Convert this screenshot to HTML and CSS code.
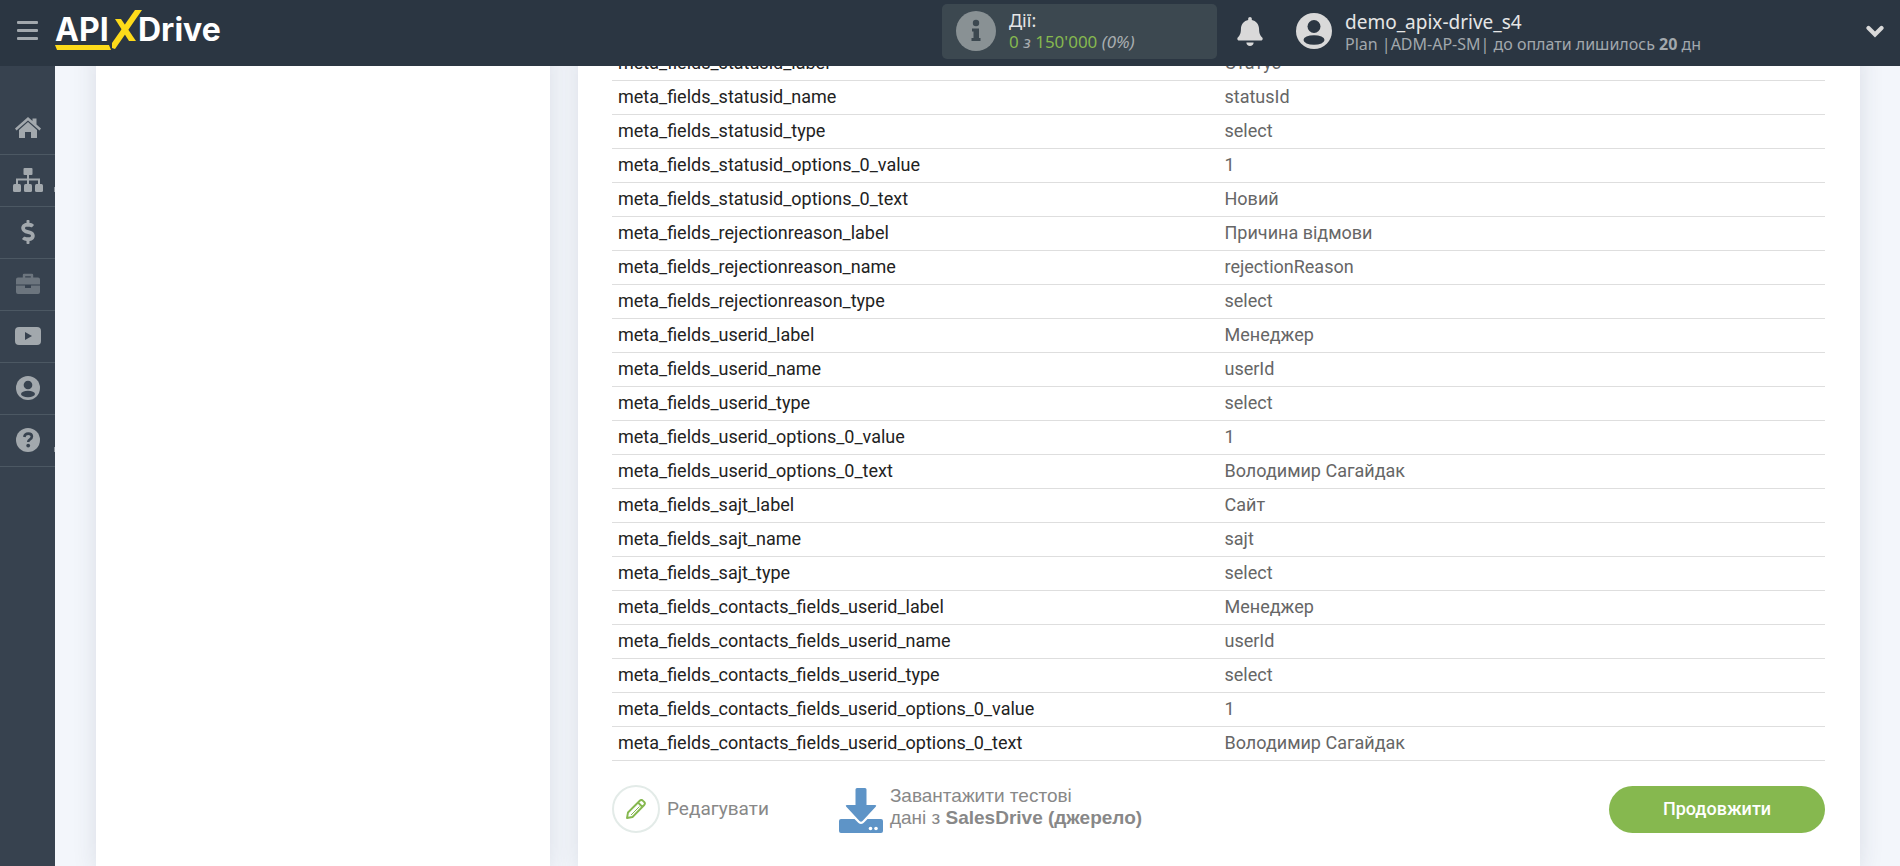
FILE: index.html
```html
<!DOCTYPE html>
<html lang="uk">
<head>
<meta charset="utf-8">
<title>ApiX-Drive</title>
<link rel="stylesheet" href="styles.css">
</head>
<body>
<header class="topbar">
  <button class="menu-toggle" aria-label="Меню"><span></span><span></span><span></span></button>
  <a class="logo" href="#" aria-label="APIXDrive">
    <svg width="172" height="44" viewBox="0 0 172 44">
      <text class="logo-text" x="0" y="32">API</text>
      <text class="logo-text" x="83" y="32">Drive</text>
      <path d="M0 36h54l2 5H2z" fill="#fddb1a"/>
      <path d="M80 1h7L60 40l-3-1v-5z" fill="#fddb1a"/>
      <path d="M60 10h6l15 22h-7z" fill="#fddb1a"/>
    </svg>
  </a>
  <section class="actions">
    <svg class="info" viewBox="0 0 40 40"><circle cx="20" cy="20" r="20" fill="#899194"/><g fill="#3c4850"><circle cx="20" cy="12" r="3.2"/><path d="M16 17.500h7v9.500h1.500v3h-9v-3h2v-6.500h-1.500z"/></g></svg>
    <div class="actions-text">
      <div class="actions-title">Дії:</div>
      <div class="actions-count"><b>0</b> <i>з</i> <b>150'000</b> <i>(0%)</i></div>
    </div>
  </section>
  <button class="bell" aria-label="Сповіщення"><svg width="26" height="29" viewBox="0 0 448 512"><path fill="#d9d9d9" d="M224 512c35.320 0 63.970-28.650 63.970-64H160.030c0 35.350 28.650 64 63.970 64zm215.390-149.710c-19.320-20.760-55.470-51.990-55.470-154.290 0-77.700-54.480-139.900-127.940-155.160V32c0-17.670-14.320-32-31.980-32s-31.980 14.330-31.980 32v20.840C118.560 68.100 64.080 130.300 64.080 208c0 102.300-36.150 133.530-55.470 154.290-6 6.450-8.660 14.160-8.610 21.710.11 16.400 12.980 32 32.100 32h383.800c19.120 0 32-15.600 32.100-32 .05-7.550-2.610-15.270-8.610-21.710z"/></svg></button>
  <button class="account">
    <svg width="36" height="36" viewBox="0 0 36 36"><circle cx="18" cy="18" r="18" fill="#d9d9d9"/><g fill="#2b3642"><circle cx="18" cy="13.500" r="6.500"/><ellipse cx="18" cy="27" rx="10.500" ry="4.800"/></g></svg>
    <span class="account-text">
      <span class="account-name">demo_apix-drive_s4</span>
      <span class="account-plan">Plan |ADM-AP-SM| до оплати лишилось <b>20</b> дн</span>
    </span>
    <svg class="chevron" width="18" height="13" viewBox="0 0 18 13"><path d="M2.500 3l6.500 6.500L15.500 3" fill="none" stroke="#d9d9d9" stroke-width="4.200" stroke-linecap="round"/></svg>
  </button>
</header>
<div class="body">
  <nav class="sidebar">
    <a href="#" aria-label="Головна"><svg width="28" height="24" viewBox="0 0 28 24"><g fill="#a2a8ad"><path d="M1 12.500L14 1l4.500 4V2.500h4v6L27 12.500l-1.500 2L14 4.500 2.500 14.500z"/><path d="M5 14l9-8 9 8v7.500q0 .5-.5.500H17v-6h-6v6H5.500q-.5 0-.5-.5z"/></g></svg></a>
    <a href="#" class="more" aria-label="Зв'язки"><svg width="30" height="24" viewBox="0 0 30 24"><g fill="#a2a8ad"><rect x="10.500" width="9" height="7" rx="1"/><rect y="16" width="8" height="8" rx="1.500"/><rect x="11" y="16" width="8" height="8" rx="1.500"/><rect x="22" y="16" width="8" height="8" rx="1.500"/></g><path d="M15 7v9M4 16v-4.500h22V16" fill="none" stroke="#a2a8ad" stroke-width="2"/></svg></a>
    <a href="#" aria-label="Оплата"><svg width="14" height="24" viewBox="0 0 288 512"><path fill="#a2a8ad" d="M209.200 233.400l-108-31.600C88.700 198.200 80 186.500 80 173.500c0-16.300 13.200-29.500 29.500-29.500h66.300c12.200 0 24.200 3.700 34.200 10.500 6.100 4.100 14.300 3.100 19.500-2l34.800-34c7.100-6.900 6.100-18.400-1.800-24.500C238 74.800 207.400 64.100 176 64V16c0-8.800-7.200-16-16-16h-32c-8.800 0-16 7.200-16 16v48h-2.500C45.800 64-5.400 118.700.5 183.600c4.200 46.100 39.400 83.600 83.800 96.600l102.500 30c12.500 3.700 21.200 15.300 21.200 28.300 0 16.300-13.200 29.500-29.500 29.500h-66.300C100 368 88 364.300 78 357.500c-6.100-4.100-14.300-3.100-19.500 2l-34.800 34c-7.100 6.900-6.100 18.400 1.800 24.500 24.500 19.200 55.100 29.900 86.500 30v48c0 8.800 7.200 16 16 16h32c8.800 0 16-7.200 16-16v-48.200c46.600-.9 90.300-28.600 105.700-72.700 21.500-61.600-14.600-124.800-72.500-141.700z"/></svg></a>
    <a href="#" class="dim" aria-label="Проєкти"><svg width="24" height="22" viewBox="0 0 24 22"><path d="M8 5V2h8v3" fill="none" stroke="#a2a8ad" stroke-width="2.400" stroke-linejoin="round"/><path d="M2 4.500h20q2 0 2 2v5H0v-5q0-2 2-2zM0 12.500h9V15h6v-2.500h9V19q0 2-2 2H2q-2 0-2-2z" fill="#a2a8ad"/></svg></a>
    <a href="#" aria-label="Відео"><svg width="26" height="18" viewBox="0 0 26 18"><rect width="26" height="18" rx="4" fill="#a2a8ad"/><path d="M10 5l7 4-7 4z" fill="#37424f"/></svg></a>
    <a href="#" aria-label="Профіль"><svg width="24" height="24" viewBox="0 0 36 36"><circle cx="18" cy="18" r="18" fill="#a2a8ad"/><g fill="#37424f"><circle cx="18" cy="13.500" r="6.500"/><ellipse cx="18" cy="27" rx="10.500" ry="4.800"/></g></svg></a>
    <a href="#" class="more" aria-label="Довідка"><svg width="24" height="24" viewBox="0 0 24 24"><circle cx="12" cy="12" r="12" fill="#a2a8ad"/><path d="M8.300 9q.5-3.400 4-3.400 3.600 0 3.600 3 0 1.700-1.900 2.700-1.800 1-1.800 2.700" fill="none" stroke="#37424f" stroke-width="2.600"/><circle cx="12.200" cy="17.600" r="1.900" fill="#37424f"/></svg></a>
  </nav>
  <main class="content">
    <aside class="panel"></aside>
    <section class="panel panel-main">
      <table class="fields">
        <tbody>
          <tr><th scope="row">meta_fields_statusid_label</th><td>Статус</td></tr>
          <tr><th scope="row">meta_fields_statusid_name</th><td>statusId</td></tr>
          <tr><th scope="row">meta_fields_statusid_type</th><td>select</td></tr>
          <tr><th scope="row">meta_fields_statusid_options_0_value</th><td>1</td></tr>
          <tr><th scope="row">meta_fields_statusid_options_0_text</th><td>Новий</td></tr>
          <tr><th scope="row">meta_fields_rejectionreason_label</th><td>Причина відмови</td></tr>
          <tr><th scope="row">meta_fields_rejectionreason_name</th><td>rejectionReason</td></tr>
          <tr><th scope="row">meta_fields_rejectionreason_type</th><td>select</td></tr>
          <tr><th scope="row">meta_fields_userid_label</th><td>Менеджер</td></tr>
          <tr><th scope="row">meta_fields_userid_name</th><td>userId</td></tr>
          <tr><th scope="row">meta_fields_userid_type</th><td>select</td></tr>
          <tr><th scope="row">meta_fields_userid_options_0_value</th><td>1</td></tr>
          <tr><th scope="row">meta_fields_userid_options_0_text</th><td>Володимир Сагайдак</td></tr>
          <tr><th scope="row">meta_fields_sajt_label</th><td>Сайт</td></tr>
          <tr><th scope="row">meta_fields_sajt_name</th><td>sajt</td></tr>
          <tr><th scope="row">meta_fields_sajt_type</th><td>select</td></tr>
          <tr><th scope="row">meta_fields_contacts_fields_userid_label</th><td>Менеджер</td></tr>
          <tr><th scope="row">meta_fields_contacts_fields_userid_name</th><td>userId</td></tr>
          <tr><th scope="row">meta_fields_contacts_fields_userid_type</th><td>select</td></tr>
          <tr><th scope="row">meta_fields_contacts_fields_userid_options_0_value</th><td>1</td></tr>
          <tr><th scope="row">meta_fields_contacts_fields_userid_options_0_text</th><td>Володимир Сагайдак</td></tr>
        </tbody>
      </table>
      <div class="footer">
        <button class="edit">
          <span class="edit-circle"><svg width="20" height="20" viewBox="0 0 20 20"><path d="M1 19l1-5.500L14 1.500q1.500-1.200 3 .3l1.200 1.200q1.400 1.500 0 3L6.500 18zM12 3.500l4.500 4.500" fill="none" stroke="#86b84f" stroke-width="1.900" stroke-linejoin="round"/><path d="M13.500 7.500L5 16" fill="none" stroke="#86b84f" stroke-width="1"/></svg></span>
          Редагувати
        </button>
        <button class="load">
          <svg width="44" height="45" viewBox="0 0 44 45"><g fill="#5e94c7"><path d="M18 0h8q1.500 0 1.500 1.500V17H36q2 .2.700 1.800L23.500 33q-1.500 1.500-3 0L7.300 18.800Q6 17.200 8 17h8.500V1.500Q16.500 0 18 0z"/><path d="M2 31h13.500l4 4q2.500 2 5 0l4-4H42q2 0 2 2v10q0 2-2 2H2q-2 0-2-2V33q0-2 2-2z"/></g><g fill="#fff"><circle cx="31.500" cy="40.500" r="1.800"/><circle cx="37" cy="40.500" r="1.800"/></g></svg>
          <span class="load-text">Завантажити тестові<br>дані з <b>SalesDrive (джерело)</b></span>
        </button>
        <button class="next">Продовжити</button>
      </div>
    </section>
  </main>
</div>
</body>
</html>
```
FILE: styles.css
```css
* { box-sizing: border-box; }
body {
  margin: 0;
  height: 100vh;
  display: flex;
  flex-direction: column;
  overflow: hidden;
  background: #f3f6fb;
  font-family: Roboto, sans-serif;
}
button {
  border: 0;
  padding: 0;
  background: none;
  font: inherit;
  color: inherit;
  text-align: left;
  cursor: pointer;
}
svg { display: block; flex: none; }

.topbar {
  flex: none;
  height: 66px;
  display: flex;
  align-items: center;
  padding: 0 16px 4px 17px;
  background: #2b3642;
  font-family: "Noto Sans", sans-serif;
}
.menu-toggle { display: grid; gap: 5px; width: 21px; padding-bottom: 2px; }
.menu-toggle span { height: 3px; border-radius: 1px; background: #a2a8ad; }
.logo { margin-left: 17px; }
.logo-text { font: 700 32px Inter, sans-serif; fill: #fff; }
.actions {
  width: 275px;
  height: 55px;
  margin-left: auto;
  padding: 0 14px;
  display: flex;
  align-items: center;
  gap: 13px;
  border-radius: 5px;
  background: #3c4850;
}
.info { width: 40px; height: 40px; }
.actions-title { font-size: 18px; line-height: 22px; color: #e6e6e6; }
.actions-count { font-size: 17px; line-height: 22px; color: #a9aeb1; }
.actions-count b { font-weight: 400; color: #86b84f; }
.bell { margin-left: 20px; }
.account {
  display: flex;
  align-items: center;
  gap: 13px;
  margin-left: 33px;
  width: 588px;
}
.account-text { flex: 1; display: grid; padding-top: 3px; }
.account-name { font-size: 19px; line-height: 22px; color: #e6e6e6; }
.account-plan { font-size: 16px; line-height: 22px; color: #a2a8ad; }

.body { flex: 1; min-height: 0; display: flex; }
.sidebar { flex: none; width: 55px; padding-top: 37px; background: #37424f; }
.sidebar a {
  height: 52px;
  padding: 0 0 1px;
  display: grid;
  place-items: center;
  border-bottom: 1px solid #4c5863;
}
.sidebar .dim svg { opacity: .5; }
.sidebar .more {
  background: linear-gradient(#8d959c, #8d959c) right 70% / 1px 5px no-repeat;
}

.content {
  flex: 1;
  min-width: 0;
  overflow: hidden;
  display: grid;
  grid-template-columns: 454fr 1282fr;
  gap: 28px;
  padding: 0 40px 0 41px;
}
.panel {
  margin-top: -20px;
  border-radius: 6px;
  background: #fff;
  box-shadow: 0 0 24px rgba(40, 50, 70, .12);
}
.panel-main { padding: 1px 35px 36px 34px; }
.fields {
  width: 100%;
  border-collapse: separate;
  border-spacing: 0;
  table-layout: fixed;
  font-size: 18px;
  line-height: 23px;
}
.fields th, .fields td {
  height: 34px;
  padding: 4px 6px 6px;
  border-bottom: 1px solid #dedede;
  text-align: left;
  font-weight: 400;
}
.fields th { color: #222; }
.fields td { color: #666; }
.footer {
  display: flex;
  align-items: center;
  padding-top: 21px;
  font-size: 19px;
  line-height: 22px;
  color: #888;
}
.edit { display: flex; align-items: center; gap: 7px; }
.edit-circle {
  width: 48px;
  height: 48px;
  display: grid;
  place-items: center;
  border: 2px solid #e3ebe8;
  border-radius: 50%;
}
.load {
  display: flex;
  align-items: center;
  gap: 7px;
  margin-left: 70px;
  padding-top: 3px;
  font-family: "Liberation Sans", Arial, sans-serif;
}
.load-text { padding-bottom: 7px; }
.next {
  width: 216px;
  height: 47px;
  margin-left: auto;
  border-radius: 24px;
  background: #86b84f;
  color: #fff;
  font-size: 18px;
  font-weight: 500;
  text-align: center;
}
```
